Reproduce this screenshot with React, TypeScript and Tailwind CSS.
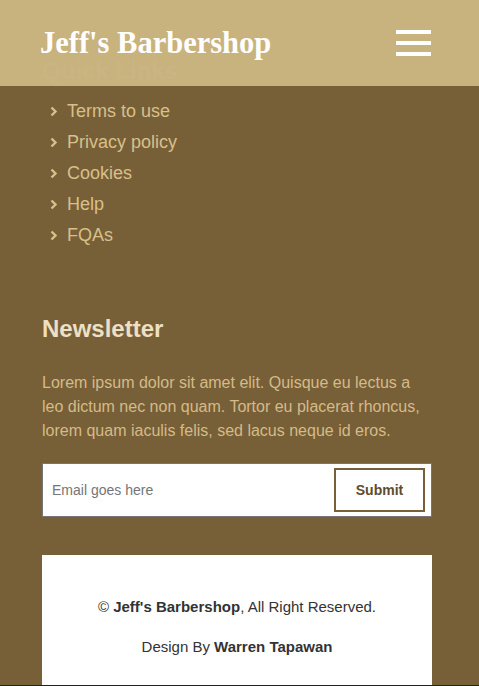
const links = ['Terms to use', 'Privacy policy', 'Cookies', 'Help', 'FQAs'];

function Chevron() {
  return (
    <svg width="8" height="11" viewBox="0 0 8 11" className="shrink-0">
      <polyline points="1.5,1.5 5.5,5.5 1.5,9.5" fill="none" stroke="#d8c08a" strokeWidth="2.4" />
    </svg>
  );
}

export default function App() {
  return (
    <div className="relative min-h-[686px] bg-[#775f38] font-['Liberation_Sans',Arial,sans-serif]">
      {/* fixed navbar sits over the first heading */}
      <header className="absolute top-0 left-0 right-0 z-10 h-[86px] bg-[rgba(201,179,127,0.99)] flex items-center justify-between pl-[40px] pr-[48px]">
        <h1 className="text-[30.5px] leading-[36px] font-bold text-white font-['Liberation_Serif','Times_New_Roman',serif]">
          Jeff's Barbershop
        </h1>
        <button className="flex flex-col gap-[7px]">
          <span className="block w-[35px] h-[4px] bg-white" />
          <span className="block w-[35px] h-[4px] bg-white" />
          <span className="block w-[35px] h-[4px] bg-white" />
        </button>
      </header>

      <div className="pl-[42px] pr-[47px] pt-[57px]">
        <h4 className="text-[24px] leading-[28px] font-bold text-[#ede0c4]">Quick Links</h4>
        <ul className="mt-[11px]">
          {links.map((l) => (
            <li key={l} className="flex items-center h-[31px] pl-[8px] gap-[9px] text-[18px] text-[#d8c08a]">
              <Chevron />
              <span>{l}</span>
            </li>
          ))}
        </ul>

        <h4 className="mt-[64px] text-[24px] leading-[28px] font-bold text-[#ede0c4]">Newsletter</h4>
        <p className="mt-[28px] text-[16px] leading-[24px] text-[#d4bb88]">
          Lorem ipsum dolor sit amet elit. Quisque eu lectus a leo dictum nec non quam. Tortor eu placerat rhoncus, lorem quam iaculis felis, sed lacus neque id eros.
        </p>

        <div className="mt-[20px] h-[54px] bg-white border border-[#767676] flex items-center justify-between pl-[9px] pr-[6px]">
          <input
            className="flex-1 min-w-0 outline-none text-[14px] text-[#333] placeholder:text-[#757575] bg-transparent"
            placeholder="Email goes here"
          />
          <button className="w-[91px] h-[44px] border-2 border-[#785f38] text-[14px] font-bold text-[#5f4b2e]">
            Submit
          </button>
        </div>

        <div className="mt-[38px] h-[130px] bg-white flex flex-col items-center pt-[42px] gap-[20px] text-[15px] leading-[20px] text-[#333]">
          <p>
            © <b>Jeff's Barbershop</b>, All Right Reserved.
          </p>
          <p>
            Design By <b>Warren Tapawan</b>
          </p>
        </div>
      </div>
      <div className="h-[10px] bg-[#222]" />
    </div>
  );
}
